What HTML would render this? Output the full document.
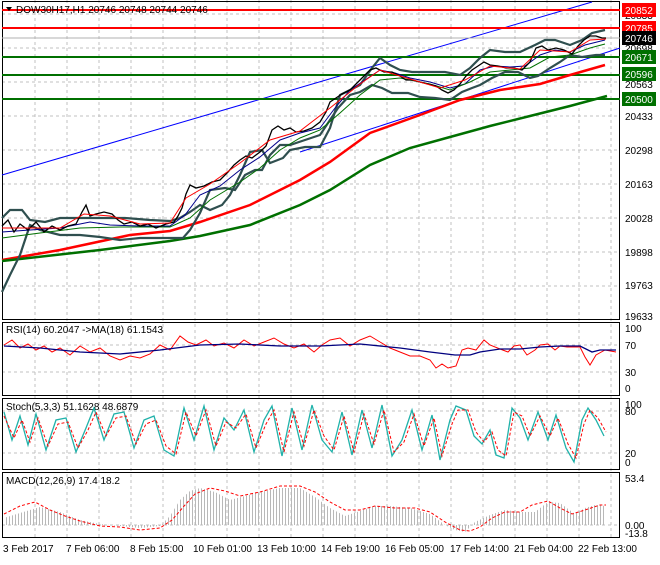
<!DOCTYPE html><html><head><style>
body{margin:0;background:#fff;width:660px;height:560px;overflow:hidden;font-family:"Liberation Sans",sans-serif}
svg text{font-family:"Liberation Sans",sans-serif;font-size:10px;fill:#000}
</style></head><body>
<svg width="660" height="560" xmlns="http://www.w3.org/2000/svg">
<defs>
<pattern id="hb" width="3" height="10" patternUnits="userSpaceOnUse"><rect x="0" y="0" width="1" height="10" fill="#b8b8b8"/></pattern>
</defs>
<rect width="660" height="560" fill="#fff"/>
<g stroke="#c0c0c0" stroke-dasharray="3,3" stroke-width="1">
<path d="M35 0V538M67 0V538M99 0V538M131 0V538M163 0V538M195 0V538M227 0V538M259 0V538M291 0V538M323 0V538M355 0V538M387 0V538M419 0V538M451 0V538M483 0V538M515 0V538M547 0V538M579 0V538M611 0V538"/>
<path d="M2 14H620M2 48H620M2 82H620M2 116H620M2 150H620M2 184H620M2 218H620M2 252H620M2 286H620"/>
<path d="M2 345H620M2 372H620M2 411H620M2 453H620M2 525H620"/>
</g>
<g fill="none" stroke="#000" stroke-width="1">
<rect x="2.5" y="1.5" width="617" height="318"/>
<rect x="2.5" y="322.5" width="617" height="73"/>
<rect x="2.5" y="398.5" width="617" height="71"/>
<rect x="2.5" y="472.5" width="617" height="65"/>
</g>
<path d="M2 175L592 2" stroke="#0000ff" stroke-width="1"/>
<path d="M300 152L620 48" stroke="#0000ff" stroke-width="1"/>
<path d="M2 10H620M2 28H620" stroke="#ff0000" stroke-width="2"/>
<path d="M2 38H620" stroke="#b0b0b0" stroke-width="1"/>
<path d="M2 57H620M2 75H620M2 99H620" stroke="#007000" stroke-width="2"/>
<polyline fill="none" stroke="#ff0000" stroke-width="2.5" points="2,260 60,250 130,235 170,231 200,222 250,205 300,180 330,162 370,133 420,115 460,100 500,90 540,84 570,75 605,65"/>
<polyline fill="none" stroke="#007000" stroke-width="2.5" points="2,261 100,250 170,241 200,236 250,225 300,205 330,190 370,165 410,148 450,137 490,126 530,116 570,106 607,96"/>
<polyline fill="none" stroke="#2f4f4f" stroke-width="2.2" points="2,218 10,210 22,210 30,220 45,222 60,218 80,218 100,218 125,218 150,220 170,221 180,218 190,212 200,205 210,210 222,205 230,195 240,175 250,152 262,150 270,163 283,158 290,150 305,147 320,147 330,128 340,95 350,90 360,85 372,68 380,58 390,65 400,70 412,72 430,72 445,72 460,75 470,68 480,58 490,50 505,52 520,52 535,45 545,40 555,40 570,45 582,40 592,33 605,30"/>
<polyline fill="none" stroke="#2f4f4f" stroke-width="2.2" points="2,292 10,275 20,255 25,240 30,225 40,230 60,235 80,235 100,237 120,240 140,238 160,238 175,238 183,238 190,230 200,213 210,190 225,188 235,190 245,175 255,170 262,170 270,155 280,145 290,145 305,140 320,135 330,120 338,108 350,95 360,92 372,85 382,88 392,93 408,93 420,97 435,98 450,100 462,92 472,88 480,85 492,78 505,72 518,72 530,78 538,76 550,68 560,62 570,55 582,57 596,55 605,55"/>
<polyline fill="none" stroke="#00008b" stroke-width="1" points="2,232 30,230 60,228 90,222 110,225 140,226 170,226 185,215 200,195 220,186 240,170 260,157 280,140 300,133 320,128 335,108 350,90 365,80 380,70 395,73 410,78 430,82 450,88 465,84 480,70 495,66 510,67 525,66 540,55 555,50 570,52 585,45 605,40"/>
<polyline fill="none" stroke="#007000" stroke-width="1" points="2,238 40,233 80,228 120,227 170,227 190,218 210,200 240,182 260,168 280,150 300,138 320,130 340,113 360,95 380,80 400,78 430,84 450,90 470,82 490,72 510,70 530,68 550,57 570,55 590,48 605,44"/>
<polyline fill="none" stroke="#000" stroke-width="1.3" points="2,226 8,220 14,232 20,224 28,230 36,222 44,232 52,226 60,230 68,226 76,224 82,212 86,205 90,216 96,214 104,212 112,214 118,220 124,224 132,222 140,226 148,224 156,228 166,224 174,222 178,216 182,208 186,194 190,185 196,188 204,186 212,182 220,180 228,172 234,165 240,160 246,156 252,158 260,152 266,146 272,130 278,126 284,130 290,128 296,132 304,131 312,128 320,122 326,112 330,102 336,98 342,94 350,90 356,84 362,78 370,70 376,68 384,72 392,72 400,76 406,80 412,80 420,82 428,84 436,86 442,90 448,93 454,90 460,84 466,76 472,70 478,66 484,62 490,65 498,66 506,68 514,68 522,70 530,62 536,48 542,46 548,50 556,48 564,50 572,54 578,46 584,40 590,36 596,36 602,38 606,38"/>
<polyline fill="none" stroke="#ff0000" stroke-width="1" points="2,228 30,228 60,228 84,214 110,216 140,224 170,223 186,198 210,184 240,163 270,140 300,131 330,108 360,84 380,70 410,79 440,88 465,80 490,66 520,69 540,50 570,52 590,40 606,39"/>
<path d="M6 7L12 7L9 11Z" fill="#000"/>
<text x="16" y="13">DOW30H17,H1  20746 20748 20744 20746</text>
<g>
<text x="625" y="19">20833</text><text x="625" y="52">20698</text><text x="625" y="88">20563</text><text x="625" y="120">20433</text><text x="625" y="154">20298</text><text x="625" y="188">20163</text><text x="625" y="222">20028</text><text x="625" y="256">19898</text><text x="625" y="289">19763</text><text x="625" y="320">19633</text>
<rect x="622" y="3" width="34" height="14" fill="#ff0000"/><text x="625" y="14" style="fill:#fff">20852</text>
<rect x="622" y="21" width="34" height="14" fill="#ff0000"/><text x="625" y="32" style="fill:#fff">20785</text>
<rect x="622" y="31" width="34" height="14" fill="#000"/><text x="625" y="42" style="fill:#fff">20746</text>
<rect x="622" y="50" width="34" height="14" fill="#007000"/><text x="625" y="61" style="fill:#fff">20671</text>
<rect x="622" y="67" width="34" height="14" fill="#007000"/><text x="625" y="78" style="fill:#fff">20596</text>
<rect x="622" y="92" width="34" height="14" fill="#007000"/><text x="625" y="103" style="fill:#fff">20500</text>
<text x="625" y="332">100</text><text x="625" y="349">70</text><text x="625" y="376">30</text><text x="625" y="392">0</text>
<text x="625" y="408">100</text><text x="625" y="415">80</text><text x="625" y="457">20</text><text x="625" y="466">0</text>
<text x="625" y="482">53.4</text><text x="625" y="529">0.00</text><text x="625" y="537">-13.8</text>
</g>
<text x="6" y="333">RSI(14) 60.2047  -&gt;MA(18) 61.1543</text>
<polyline fill="none" stroke="#ff0000" stroke-width="1" points="4,345 12,340 20,348 28,344 36,350 44,346 52,352 60,348 70,355 80,346 90,352 100,348 110,356 120,360 130,356 140,358 150,354 160,345 170,350 180,336 188,342 196,345 206,340 214,346 224,343 234,348 244,340 254,346 264,342 274,338 284,344 294,348 304,344 314,352 322,345 330,340 340,338 350,346 360,340 370,336 380,342 390,348 400,352 410,356 420,356 430,360 436,368 442,364 448,368 456,366 462,350 468,348 476,350 484,340 490,345 500,349 508,352 514,346 520,345 527,355 535,350 540,345 548,344 555,350 560,346 567,347 573,347 580,347 585,357 590,365 596,355 605,350 616,352"/>
<polyline fill="none" stroke="#00007f" stroke-width="1.3" points="4,346 40,348 80,352 120,354 160,350 200,345 240,344 280,346 320,346 360,344 400,348 430,352 455,355 470,355 480,352 500,349 520,349 540,347 560,346 580,346 592,352 600,350 616,350"/>
<text x="6" y="410">Stoch(5,3,3) 51.1628 48.6879</text>
<polyline fill="none" stroke="#20b2aa" stroke-width="1.3" points="4,412 12,440 20,416 28,445 36,414 46,450 56,420 66,418 76,452 86,428 94,408 104,440 114,414 124,412 134,448 144,420 154,416 164,450 174,456 184,408 194,440 204,406 214,450 224,418 234,430 244,410 254,452 264,420 272,406 282,456 292,408 302,450 312,405 322,440 332,452 342,412 352,455 362,410 372,448 382,405 392,456 402,440 412,410 422,450 432,415 440,460 450,420 456,406 466,410 474,436 482,444 490,430 496,455 504,458 512,408 520,418 528,440 538,412 548,440 556,415 566,448 574,462 582,420 588,408 596,420 604,436"/>
<polyline fill="none" stroke="#ff0000" stroke-width="1" stroke-dasharray="3,2" points="4,416 14,438 22,420 30,442 38,418 48,446 58,424 68,422 78,448 88,430 96,412 106,436 116,418 126,416 136,444 146,424 156,420 166,446 176,454 186,412 196,436 206,410 216,446 226,422 236,428 246,414 256,448 266,424 274,410 284,452 294,412 304,446 314,410 324,436 334,450 344,416 354,452 364,414 374,444 384,410 394,452 404,442 414,414 424,446 434,418 442,456 452,424 458,410 468,410 476,432 484,442 492,432 498,450 506,456 514,412 522,416 530,436 540,416 550,436 558,418 568,444 576,458 584,424 590,410 598,418 606,432"/>
<text x="6" y="484">MACD(12,26,9) 17.4 18.2</text>
<polygon fill="url(#hb)" points="4,525 4,518 20,513 40,507 60,512 80,520 100,524 120,526 140,528 160,526 170,516 180,500 190,491 200,488 215,492 230,500 245,496 260,492 280,488 300,488 315,497 330,508 345,516 360,511 375,506 390,506 410,508 430,514 445,525 455,530 465,532 475,522 490,515 505,510 520,512 535,512 548,502 560,503 575,514 585,508 595,505 606,506 606,525"/>
<polyline fill="none" stroke="#ff0000" stroke-width="1" stroke-dasharray="3,2" points="4,514 20,506 35,502 50,510 65,516 80,521 100,526 120,527 140,530 160,528 172,520 185,505 195,494 210,488 225,491 240,496 260,492 280,486 300,486 315,492 330,502 345,510 360,510 375,506 395,508 415,508 430,512 445,522 460,530 470,531 480,527 492,518 505,512 520,512 532,505 548,501 560,508 572,514 585,510 600,505 606,505"/>
<g>
<text x="3" y="552">3 Feb 2017</text>
<text x="66" y="552">7 Feb 06:00</text>
<text x="130" y="552">8 Feb 15:00</text>
<text x="193" y="552">10 Feb 01:00</text>
<text x="257" y="552">13 Feb 10:00</text>
<text x="321" y="552">14 Feb 19:00</text>
<text x="385" y="552">16 Feb 05:00</text>
<text x="450" y="552">17 Feb 14:00</text>
<text x="514" y="552">21 Feb 04:00</text>
<text x="578" y="552">22 Feb 13:00</text>
</g>
</svg>
</body></html>
